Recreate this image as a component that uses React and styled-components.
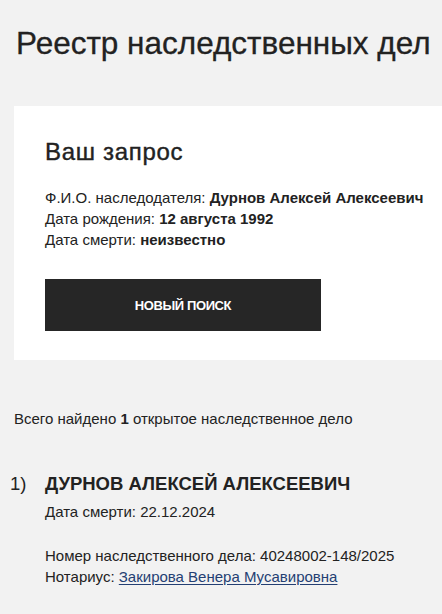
import React from "react";
import styled, { createGlobalStyle } from "styled-components";

const GlobalStyle = createGlobalStyle`
    html, body {
        margin: 0;
        padding: 0;
        background: #f2f2f2;
        overflow: hidden;
    }
    body {
        font-family: "Liberation Sans", Arial, sans-serif;
        color: #222222;
    }
`;

const Page = styled.div`
    width: 442px;
    overflow: hidden;
`;

const Title = styled.h1`
    margin: 24px 0 0 16px;
    font-size: 31.5px;
    line-height: 38px;
    font-weight: 400;
    -webkit-text-stroke: 0.3px #222222;
    white-space: nowrap;
`;

const RequestCard = styled.section`
    margin: 44px 0 0 14px;
    padding: 32px 0 29px 31px;
    background: #ffffff;
`;

const CardHeading = styled.h2`
    margin: 0 0 21px;
    font-size: 24px;
    line-height: 28px;
    font-weight: 400;
    letter-spacing: 0.7px;
    -webkit-text-stroke: 0.4px #222222;
`;

const InfoLine = styled.p`
    margin: 0;
    font-size: 15px;
    line-height: 21px;
    white-space: nowrap;

    b {
        font-weight: 700;
    }
`;

const SearchButton = styled.button`
    display: block;
    margin-top: 29px;
    width: 276px;
    height: 52px;
    border: 0;
    background: #262626;
    color: #ffffff;
    font-family: "Liberation Sans", Arial, sans-serif;
    font-size: 13px;
    font-weight: 700;
    letter-spacing: -0.4px;
    text-transform: uppercase;
    cursor: pointer;
`;

const Summary = styled.p`
    margin: 48px 0 0 14px;
    font-size: 15px;
    line-height: 21px;
`;

const CaseList = styled.ol`
    margin: 43px 0 0;
    padding: 0 0 0 10px;
    list-style: none;
`;

const CaseItem = styled.li`
    display: grid;
    grid-template-columns: 35px 1fr;
`;

const CaseNumber = styled.span`
    font-size: 18.5px;
    line-height: 24px;
`;

const CaseName = styled.h3`
    margin: 0 0 5px;
    font-size: 18.5px;
    line-height: 24px;
    font-weight: 700;
    text-transform: uppercase;
    white-space: nowrap;
`;

const CaseBlock = styled.div`
    margin-top: ${props => props.$gap || 0}px;
`;

const NotaryLink = styled.a`
    color: #243f73;
    text-decoration: underline;
    text-underline-offset: 2px;
`;

const request = [
    { label: "Ф.И.О. наследодателя:", value: "Дурнов Алексей Алексеевич" },
    { label: "Дата рождения:", value: "12 августа 1992" },
    { label: "Дата смерти:", value: "неизвестно" }
];

export default function App() {
    return (
        <Page>
            <GlobalStyle />
            <Title>Реестр наследственных дел</Title>

            <RequestCard>
                <CardHeading>Ваш запрос</CardHeading>
                {request.map(row => (
                    <InfoLine key={row.label}>
                        {row.label} <b>{row.value}</b>
                    </InfoLine>
                ))}
                <SearchButton>Новый поиск</SearchButton>
            </RequestCard>

            <Summary>
                Всего найдено <b>1</b> открытое наследственное дело
            </Summary>

            <CaseList>
                <CaseItem>
                    <CaseNumber>1)</CaseNumber>
                    <div>
                        <CaseName>Дурнов Алексей Алексеевич</CaseName>
                        <CaseBlock>
                            <InfoLine>Дата смерти: 22.12.2024</InfoLine>
                        </CaseBlock>
                        <CaseBlock $gap={23}>
                            <InfoLine>
                                Номер наследственного дела: 40248002-148/2025
                            </InfoLine>
                            <InfoLine>
                                Нотариус:{" "}
                                <NotaryLink href="#">
                                    Закирова Венера Мусавировна
                                </NotaryLink>
                            </InfoLine>
                        </CaseBlock>
                    </div>
                </CaseItem>
            </CaseList>
        </Page>
    );
}
